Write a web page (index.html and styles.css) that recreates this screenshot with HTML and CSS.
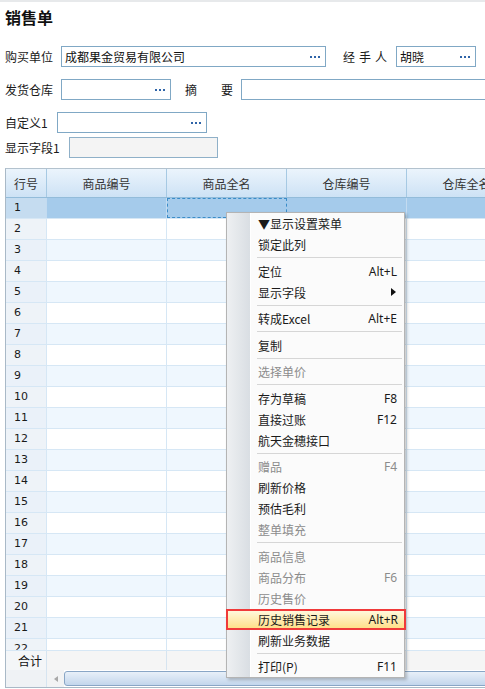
FILE: index.html
```html
<!DOCTYPE html>
<html lang="zh-CN">
<head>
<meta charset="utf-8">
<title>销售单</title>
<link rel="stylesheet" href="styles.css">
</head>
<body>
<div class="topline"></div>
<h1 class="title">销售单</h1>

<div class="form">
  <div class="frow">
    <span class="lbl l56">购买单位</span>
    <div class="field w265"><span class="val">成都果金贸易有限公司</span><span class="dots"><i></i><i></i><i></i></span></div>
    <span class="lbl handler">经手人</span>
    <div class="field w80"><span class="val">胡晓</span><span class="dots"><i></i><i></i><i></i></span></div>
  </div>
  <div class="frow">
    <span class="lbl l56">发货仓库</span>
    <div class="field w110"><span class="val"></span><span class="dots"><i></i><i></i><i></i></span></div>
    <span class="lbl memo"><span class="memo-a">摘</span>要</span>
    <div class="field w260"></div>
  </div>
  <div class="frow">
    <span class="lbl l52">自定义1</span>
    <div class="field w150"><span class="val"></span><span class="dots"><i></i><i></i><i></i></span></div>
  </div>
  <div class="frow tight">
    <span class="lbl l64">显示字段1</span>
    <div class="field w149 readonly"></div>
  </div>
</div>

<div class="grid">
  <div class="hrow">
    <div class="h num">行号</div>
    <div class="h">商品编号</div>
    <div class="h">商品全名</div>
    <div class="h">仓库编号</div>
    <div class="h">仓库全名</div>
  </div>
  <div class="gbody">
    <div class="row sel"><div class="c num">1</div><div class="c"></div><div class="c focus"></div><div class="c"></div><div class="c"></div></div>
    <div class="row"><div class="c num">2</div><div class="c"></div><div class="c"></div><div class="c"></div><div class="c"></div></div>
    <div class="row alt"><div class="c num">3</div><div class="c"></div><div class="c"></div><div class="c"></div><div class="c"></div></div>
    <div class="row"><div class="c num">4</div><div class="c"></div><div class="c"></div><div class="c"></div><div class="c"></div></div>
    <div class="row alt"><div class="c num">5</div><div class="c"></div><div class="c"></div><div class="c"></div><div class="c"></div></div>
    <div class="row"><div class="c num">6</div><div class="c"></div><div class="c"></div><div class="c"></div><div class="c"></div></div>
    <div class="row alt"><div class="c num">7</div><div class="c"></div><div class="c"></div><div class="c"></div><div class="c"></div></div>
    <div class="row"><div class="c num">8</div><div class="c"></div><div class="c"></div><div class="c"></div><div class="c"></div></div>
    <div class="row alt"><div class="c num">9</div><div class="c"></div><div class="c"></div><div class="c"></div><div class="c"></div></div>
    <div class="row"><div class="c num">10</div><div class="c"></div><div class="c"></div><div class="c"></div><div class="c"></div></div>
    <div class="row alt"><div class="c num">11</div><div class="c"></div><div class="c"></div><div class="c"></div><div class="c"></div></div>
    <div class="row"><div class="c num">12</div><div class="c"></div><div class="c"></div><div class="c"></div><div class="c"></div></div>
    <div class="row alt"><div class="c num">13</div><div class="c"></div><div class="c"></div><div class="c"></div><div class="c"></div></div>
    <div class="row"><div class="c num">14</div><div class="c"></div><div class="c"></div><div class="c"></div><div class="c"></div></div>
    <div class="row alt"><div class="c num">15</div><div class="c"></div><div class="c"></div><div class="c"></div><div class="c"></div></div>
    <div class="row"><div class="c num">16</div><div class="c"></div><div class="c"></div><div class="c"></div><div class="c"></div></div>
    <div class="row alt"><div class="c num">17</div><div class="c"></div><div class="c"></div><div class="c"></div><div class="c"></div></div>
    <div class="row"><div class="c num">18</div><div class="c"></div><div class="c"></div><div class="c"></div><div class="c"></div></div>
    <div class="row alt"><div class="c num">19</div><div class="c"></div><div class="c"></div><div class="c"></div><div class="c"></div></div>
    <div class="row"><div class="c num">20</div><div class="c"></div><div class="c"></div><div class="c"></div><div class="c"></div></div>
    <div class="row alt"><div class="c num">21</div><div class="c"></div><div class="c"></div><div class="c"></div><div class="c"></div></div>
    <div class="row"><div class="c num">22</div><div class="c"></div><div class="c"></div><div class="c"></div><div class="c"></div></div>
  </div>
  <div class="sumrow">
    <div class="s num">合计</div><div class="s"></div><div class="s"></div><div class="s"></div><div class="s"></div>
  </div>
  <div class="scroll">
    <div class="sl"></div>
    <div class="btn"><span class="tri"></span></div>
    <div class="thumb"></div>
  </div>
</div>

<div class="menu">
  <div class="mi"><span>▼显示设置菜单</span></div>
  <div class="mi"><span>锁定此列</span></div>
  <div class="sep"></div>
  <div class="mi"><span>定位</span><span class="key">Alt+L</span></div>
  <div class="mi"><span>显示字段</span><span class="arr"></span></div>
  <div class="sep"></div>
  <div class="mi"><span>转成Excel</span><span class="key">Alt+E</span></div>
  <div class="sep"></div>
  <div class="mi"><span>复制</span></div>
  <div class="sep"></div>
  <div class="mi dis"><span>选择单价</span></div>
  <div class="sep"></div>
  <div class="mi"><span>存为草稿</span><span class="key">F8</span></div>
  <div class="mi"><span>直接过账</span><span class="key">F12</span></div>
  <div class="mi"><span>航天金穗接口</span></div>
  <div class="sep"></div>
  <div class="mi dis"><span>赠品</span><span class="key">F4</span></div>
  <div class="mi"><span>刷新价格</span></div>
  <div class="mi"><span>预估毛利</span></div>
  <div class="mi dis"><span>整单填充</span></div>
  <div class="sep"></div>
  <div class="mi dis"><span>商品信息</span></div>
  <div class="mi dis"><span>商品分布</span><span class="key">F6</span></div>
  <div class="mi dis"><span>历史售价</span></div>
  <div class="mi hl"><span>历史销售记录</span><span class="key">Alt+R</span></div>
  <div class="mi"><span>刷新业务数据</span></div>
  <div class="sep"></div>
  <div class="mi"><span>打印(P)</span><span class="key">F11</span></div>
</div>
</body>
</html>
```

FILE: styles.css
```css
* { box-sizing: border-box; }
html, body { margin: 0; padding: 0; }
body {
  width: 485px;
  height: 689px;
  overflow: hidden;
  position: relative;
  background: #fff;
  color: #1a1a1a;
  font-family: "Noto Sans CJK SC", "Noto Sans", sans-serif;
  font-size: 12px;
}

.topline { height: 2px; background: #e7e9eb; }

.title {
  margin: 4px 0 0;
  padding-left: 5px;
  font-size: 16px;
  font-weight: bold;
  line-height: 22px;
  color: #111;
}

/* form */
.form { padding-left: 5px; margin-top: 18px; }
.frow { display: flex; align-items: center; height: 21px; }
.frow + .frow { margin-top: 12px; }
.frow.tight { margin-top: 4px; }
.lbl { white-space: nowrap; line-height: 21px; flex: none; }
.l56 { width: 56px; }
.l52 { width: 52px; }
.l64 { width: 64px; }
.handler { margin-left: 17px; width: 53px; letter-spacing: 4px; }
.memo { margin-left: 14px; width: 56px; }
.memo-a { margin-right: 24px; }

.field {
  flex: none;
  height: 21px;
  border: 1px solid #80a8c5;
  background: #fff;
  display: flex;
  align-items: center;
  justify-content: space-between;
  padding: 0 5px 0 3px;
}
.field.readonly { background: #f4f4f4; border-color: #8fb0c8; }
.w265 { width: 265px; }
.w80 { width: 80px; }
.w110 { width: 110px; }
.w260 { width: 260px; }
.w150 { width: 150px; }
.w149 { width: 149px; }
.val { white-space: nowrap; color: #111; }
.dots { display: flex; gap: 2px; margin-top: 1px; }
.dots i { display: block; width: 2px; height: 2px; background: #2f64a8; }

/* grid */
.grid {
  margin-top: 10px;
  margin-left: 5px;
  width: 490px;
  overflow: hidden;
  border-left: 1px solid #a9b9c7;
  border-top: 1px solid #b3c2ce;
  border-bottom: 1px solid #a9b9c7;
}
.hrow {
  display: flex;
  height: 29px;
  background: linear-gradient(#ebf4fc, #cde2f5);
  border-bottom: 1px solid #93bcda;
}
.h {
  flex: none;
  width: 120px;
  border-right: 1px solid #a6c9e3;
  display: flex;
  align-items: center;
  justify-content: center;
  color: #333;
}
.h.num, .c.num, .s.num, .sl { width: 41px; }

.gbody { height: 452px; overflow: hidden; }
.row { display: flex; height: 21px; border-bottom: 1px solid #d6e7f5; }
.c { flex: none; width: 120px; border-right: 1px solid #d6e7f5; }
.c.num {
  background: #eef3f8;
  padding-left: 8px;
  font-family: "DejaVu Sans", sans-serif;
  font-size: 11px;
  line-height: 20px;
  color: #1a1a1a;
}
.row.alt .c { background: #eff7fe; }
.row.alt .c.num { background: #eaf1f9; }
.row.sel .c { background: #a5cbeb; border-right-color: #c3dbf0; }
.row.sel .c.num { background: #c5dcf0; }
.row.sel .c.focus { border: 1px dashed #3a8cc8; }

.sumrow { display: flex; height: 20px; border-top: 1px solid #d6e7f5; }
.s { flex: none; width: 120px; background: #f5f5f5; border-right: 1px solid #d6e4f0; }
.s.num { background: #f4f6f8; padding-left: 12px; line-height: 19px; color: #111; }

.scroll { display: flex; height: 17px; width: 530px; }
.sl { flex: none; background: #eff2f5; border-right: 1px solid #d6e4f0; }
.btn {
  flex: none;
  width: 17px;
  background: #f2f3f4;
  display: flex;
  align-items: center;
  justify-content: center;
}
.tri {
  width: 0; height: 0;
  border-right: 4px solid #a8a8a8;
  border-top: 3px solid transparent;
  border-bottom: 3px solid transparent;
}
.thumb {
  flex: 1;
  margin: 1px 0;
  border: 1px solid #89a6c6;
  border-radius: 3px;
  background: linear-gradient(#e8f0f9, #c3d6ec);
}

/* context menu */
.menu {
  position: absolute;
  left: 226px;
  top: 212px;
  width: 179px;
  border: 1px solid #b4b4b4;
  background: linear-gradient(to right, #eef0f2 0, #d9dee3 23px, #ffffff 23px, #ffffff 24px, #fbfbfb 24px);
  box-shadow: 2px 2px 3px rgba(0, 0, 0, 0.22);
  z-index: 10;
}
.mi {
  height: 21px;
  display: flex;
  align-items: center;
  justify-content: space-between;
  padding: 0 7px 0 31px;
  white-space: nowrap;
  color: #1a1a1a;
}
.mi.dis { color: #8c8c8c; }
.key { font-family: "Noto Sans", sans-serif; font-size: 12px; }
.arr {
  width: 0; height: 0;
  border-left: 5px solid #111;
  border-top: 4px solid transparent;
  border-bottom: 4px solid transparent;
  margin-right: 1px;
}
.sep { height: 5.5px; position: relative; }
.sep::after {
  content: "";
  position: absolute;
  left: 30px;
  right: 2px;
  top: 2px;
  height: 1px;
  background: #d6d6d6;
}
.mi.hl {
  margin: 0 -2px 0 -1px;
  border: 2px solid #f03a3a;
  background: linear-gradient(#fff8dc, #ffe08a);
  padding: 0 6px 0 30px;
}
```
